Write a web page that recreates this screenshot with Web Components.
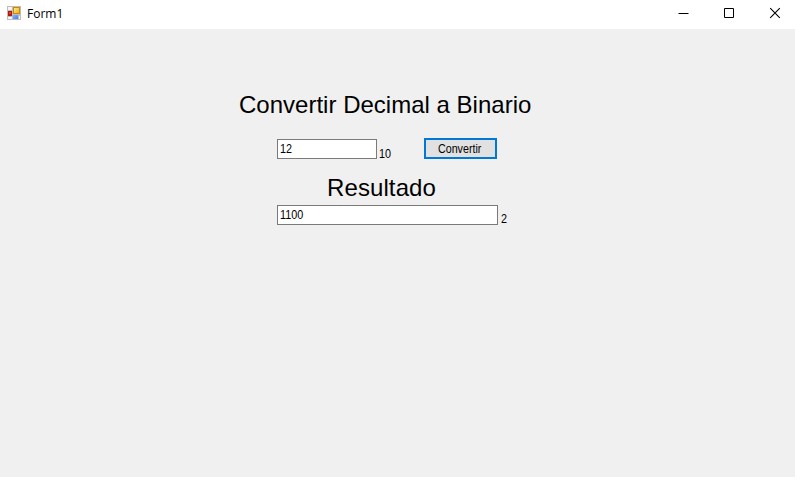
<!DOCTYPE html>
<html lang="es">
<head>
<meta charset="utf-8">
<title>Form1</title>
<style>
html, body { margin: 0; height: 100%; overflow: hidden; }
</style>
</head>
<body>
<form-window></form-window>
<script>
const define = (name, html) => customElements.define(name, class extends HTMLElement {
  constructor() {
    super();
    this.attachShadow({ mode: 'open' }).innerHTML = html;
  }
});

define('app-icon', `
<style>:host{display:block;width:14px;height:14px}svg{display:block}</style>
<svg width="14" height="14" viewBox="0 0 14 14" shape-rendering="crispEdges">
  <defs>
    <linearGradient id="y" x2="1" y2="1"><stop stop-color="#ffe784"/><stop offset="1" stop-color="#eeb020"/></linearGradient>
    <linearGradient id="b" x2="1" y2="1"><stop stop-color="#86b4ff"/><stop offset="1" stop-color="#3f7ff0"/></linearGradient>
  </defs>
  <rect width="14" height="14" fill="#bdbdbd"/>
  <path d="M1 1h4v3H1zM1 11h4v2H1zM12 10h1v3h-1z" fill="#f4f4f4"/>
  <rect x="1" y="5" width="4" height="5" fill="#b3170d"/>
  <rect x="2" y="6" width="2" height="2" fill="#d8402c"/>
  <rect x="6" y="1" width="7" height="7" fill="#c98b05"/>
  <rect x="7" y="2" width="5" height="5" fill="url(#y)"/>
  <rect x="6" y="9" width="5" height="4" fill="url(#b)"/>
</svg>`);

define('caption-buttons', `
<style>:host{display:flex;height:28px}svg{display:block;width:46px;height:28px}svg:first-child{width:45px}svg:last-child{width:42px}</style>
<svg viewBox="0 0 45 28"><path d="M17 13.5h10" stroke="#000"/></svg>
<svg viewBox="0 0 46 28"><path d="M17.5 8.5h9v9h-9z" fill="none" stroke="#000"/></svg>
<svg viewBox="0 0 42 28"><path d="M17.2 8.2l9.6 9.6M26.8 8.2l-9.6 9.6" stroke="#000" stroke-width="1.1"/></svg>`);

define('title-bar', `
<style>
:host{display:flex;align-items:flex-start;justify-content:space-between;height:29px;background:#fff}
.name{display:flex;padding:6px 0 0 7px;gap:6px}
span{font:12px/16px "Open Sans","Noto Sans",sans-serif;color:#000}
</style>
<div class="name"><app-icon></app-icon><span><slot></slot></span></div>
<caption-buttons></caption-buttons>`);

define('form-heading', `
<style>:host{display:block;width:max-content;white-space:nowrap;font:24px/28px "Liberation Sans",Arial,sans-serif;letter-spacing:var(--track,0)}</style>
<slot></slot>`);

define('small-text', `
<style>:host{display:block;width:max-content;font:12.5px/14px "Liberation Sans",Arial,sans-serif;transform:scaleX(var(--sx,.865));transform-origin:0 0}</style>
<slot></slot>`);

define('text-field', `
<style>:host{display:block;box-sizing:border-box;height:20px;border:1px solid #7a7a7a;background:#fff;padding:2px 0 0 2px}</style>
<small-text><slot></slot></small-text>`);

define('push-button', `
<style>:host{display:block;box-sizing:border-box;width:73px;height:21px;border:2px solid #0078d7;background:#e1e1e1;padding:2px 0 0 12px}</style>
<small-text style="--sx:.855"><slot></slot></small-text>`);

define('form-window', `
<style>
:host{display:block;height:100%;background:#f0f0f0;color:#000}
main{padding-top:62px}
.title{margin-left:239px;--track:.01px}
.row{display:flex;align-items:flex-start;margin-left:277px}
.input{margin-top:19px;height:21px}
.input text-field{width:100px;margin-top:1px}
.input small-text{margin:9px 0 0 2px;width:45px}
.result{margin:15px 0 0 327px;--track:.1px}
.output{margin-top:3px}
.output text-field{width:221px}
.output small-text{margin:7px 0 0 3px}
</style>
<title-bar>Form1</title-bar>
<main>
  <form-heading class="title">Convertir Decimal a Binario</form-heading>
  <div class="row input"><text-field>12</text-field><small-text>10</small-text><push-button>Convertir</push-button></div>
  <form-heading class="result">Resultado</form-heading>
  <div class="row output"><text-field>1100</text-field><small-text>2</small-text></div>
</main>`);
</script>
</body>
</html>
